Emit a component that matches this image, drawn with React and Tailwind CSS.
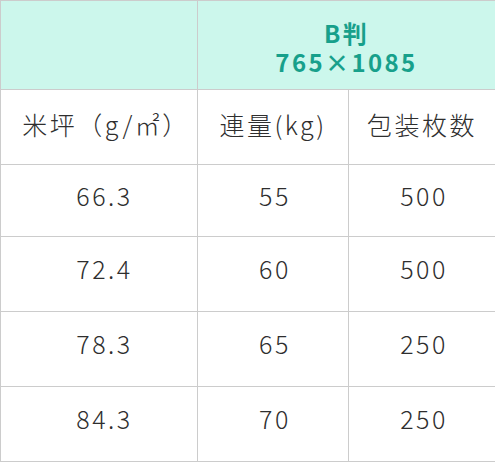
import React from 'react';

const rows = [
  ['66.3', '55', '500'],
  ['72.4', '60', '500'],
  ['78.3', '65', '250'],
  ['84.3', '70', '250'],
];

const cell = 'border border-[#cccccc] text-center align-middle p-0';

const App = () => {
  return (
    <div
      className="w-[495px] h-[462px] bg-white text-[#2e2e2e]"
      style={{ fontFamily: '"Noto Sans CJK JP", "Noto Sans", sans-serif' }}
    >
      <table className="w-[495px] border-collapse table-fixed">
        <colgroup>
          <col className="w-[197px]" />
          <col className="w-[151px]" />
          <col className="w-[147px]" />
        </colgroup>
        <thead>
          <tr className="h-[89px] bg-[#ccf7ec]">
            <th className={cell}></th>
            <th
              colSpan={2}
              className={`${cell} text-[#17a08b] font-bold text-[24px] tracking-[0.1em] pt-[3px]`}
            >
              <div className="leading-[29px]">B判</div>
              <div className="leading-[29px]">765×1085</div>
            </th>
          </tr>
          <tr className="h-[75px] text-[25px] tracking-[0.1em]">
            <th className={`${cell} font-light pb-[4px] pl-[14px]`}>米坪（g/㎡）</th>
            <th className={`${cell} font-light pb-[4px]`}>連量(kg)</th>
            <th className={`${cell} font-light pb-[4px]`}>包装枚数</th>
          </tr>
        </thead>
        <tbody className="text-[25px] tracking-[0.1em] font-light">
          {rows.map((r, i) => (
            <tr key={i} className={i === 0 ? 'h-[72px]' : 'h-[75px]'}>
              {r.map((v, j) => (
                <td key={j} className={`${cell} pb-[10px] ${j === 0 ? 'pl-[11px]' : 'pl-[4px]'}`}>
                  {v}
                </td>
              ))}
            </tr>
          ))}
        </tbody>
      </table>
    </div>
  );
};

export default App;
